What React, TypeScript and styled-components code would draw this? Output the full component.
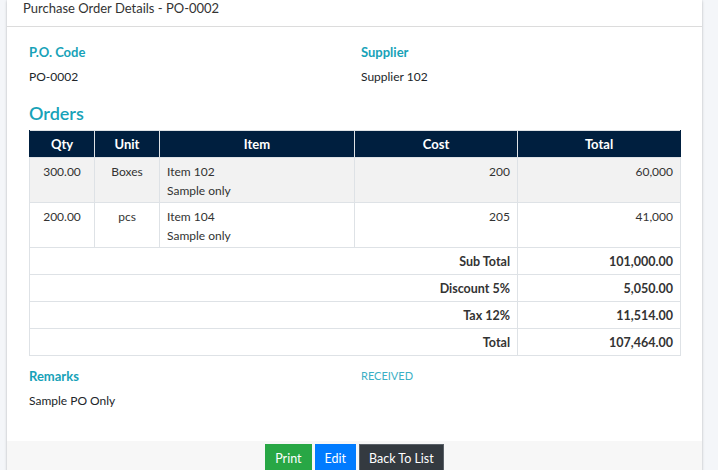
import styled, { createGlobalStyle } from "styled-components";

const GlobalStyle = createGlobalStyle`
  html, body {
    margin: 0;
    padding: 0;
    background: #f4f6f9;
    font-family: Lato, "Noto Sans", sans-serif;
    color: #212529;
  }
  * { box-sizing: border-box; }
`;

const items = [
  { qty: "300.00", unit: "Boxes", name: "Item 102", desc: "Sample only", cost: "200", total: "60,000" },
  { qty: "200.00", unit: "pcs", name: "Item 104", desc: "Sample only", cost: "205", total: "41,000" },
];

const summary = [
  { label: "Sub Total", value: "101,000.00" },
  { label: "Discount 5%", value: "5,050.00" },
  { label: "Tax 12%", value: "11,514.00" },
  { label: "Total", value: "107,464.00" },
];

export default () => {
  return (
    <>
      <GlobalStyle />
      <Page>
        <Card>
          <CardHeader>Purchase Order Details - PO-0002</CardHeader>
          <CardBody>
            <InfoRow>
              <div>
                <Label>P.O. Code</Label>
                <Value>PO-0002</Value>
              </div>
              <div>
                <Label>Supplier</Label>
                <Value>Supplier 102</Value>
              </div>
            </InfoRow>
            <Heading>Orders</Heading>
            <Table>
              <colgroup>
                <col style={{ width: 65 }} />
                <col style={{ width: 65 }} />
                <col style={{ width: 195 }} />
                <col style={{ width: 163 }} />
                <col style={{ width: 163 }} />
              </colgroup>
              <thead>
                <tr>
                  <Th>Qty</Th>
                  <Th>Unit</Th>
                  <Th>Item</Th>
                  <Th>Cost</Th>
                  <Th>Total</Th>
                </tr>
              </thead>
              <tbody>
                {items.map((it, i) => (
                  <BodyRow key={it.name} $striped={i % 2 === 0}>
                    <Td $align="center">{it.qty}</Td>
                    <Td $align="center">{it.unit}</Td>
                    <Td>
                      {it.name}
                      <br />
                      {it.desc}
                    </Td>
                    <Td $align="right">{it.cost}</Td>
                    <Td $align="right">{it.total}</Td>
                  </BodyRow>
                ))}
                {summary.map((s) => (
                  <tr key={s.label}>
                    <SumTd colSpan={4}>{s.label}</SumTd>
                    <SumTd>{s.value}</SumTd>
                  </tr>
                ))}
              </tbody>
            </Table>
            <InfoRow $top={10}>
              <div>
                <Label>Remarks</Label>
                <Value>Sample PO Only</Value>
              </div>
              <div>
                <Status>RECEIVED</Status>
              </div>
            </InfoRow>
          </CardBody>
          <CardFooter>
            <Button $bg="#28a745">Print</Button>
            <Button $bg="#007bff">Edit</Button>
            <Button $bg="#343a40" $border="#5a6168">
              Back To List
            </Button>
          </CardFooter>
        </Card>
      </Page>
    </>
  );
};

const Page = styled.div`
  padding: 0 16px 0 7px;
  height: 470px;
  overflow: hidden;
`;

const Card = styled.div`
  background: #fff;
  box-shadow: 0 0 1px rgba(0, 0, 0, 0.125), 0 1px 3px rgba(0, 0, 0, 0.2);
`;

const CardHeader = styled.div`
  height: 27px;
  padding: 0 16px;
  line-height: 17px;
  font-size: 13px;
  color: #333;
  border-bottom: 1px solid #dcdcdc;
`;

const CardBody = styled.div`
  padding: 15px 22px 30px;
`;

const InfoRow = styled.div<{ $top?: number }>`
  display: grid;
  grid-template-columns: 319px 319px;
  column-gap: 13px;
  margin-top: ${({ $top }) => $top || 0}px;
`;

const Label = styled.div`
  font-size: 13px;
  font-weight: 700;
  color: #17a2b8;
  line-height: 20px;
`;

const Status = styled.div`
  font-size: 11px;
  color: #3bb0c5;
  line-height: 20px;
`;

const Value = styled.div`
  font-size: 12px;
  line-height: 20px;
  margin-top: 5px;
`;

const Heading = styled.h3`
  margin: 14px 0 5px;
  font-size: 18px;
  font-weight: 600;
  line-height: 24px;
  color: #17a2b8;
`;

const Table = styled.table`
  width: 651px;
  border-collapse: collapse;
  table-layout: fixed;
  font-size: 12px;
  border: 1px solid #dee2e6;
`;

const Th = styled.th`
  background: #001f3f;
  color: #fff;
  font-size: 13px;
  font-weight: 700;
  text-align: center;
  padding: 4px 7px 3px;
  line-height: 19px;
  border: 1px solid #dee2e6;
  border-top: 0;
  &:first-child { border-left-color: #001f3f; }
  &:last-child { border-right-color: #001f3f; }
`;

const BodyRow = styled.tr<{ $striped: boolean }>`
  background: ${({ $striped }) => ($striped ? "#f2f2f2" : "#fff")};
`;

const Td = styled.td<{ $align?: string }>`
  padding: 4px 7px 2px;
  line-height: 19px;
  vertical-align: top;
  text-align: ${({ $align }) => $align || "left"};
  color: #333;
  border: 1px solid #dee2e6;
`;

const SumTd = styled.td`
  padding: 4px 7px 3px;
  line-height: 19px;
  text-align: right;
  font-size: 12.5px;
  font-weight: 700;
  color: #333;
  border: 1px solid #dee2e6;
`;

const CardFooter = styled.div`
  background: #f7f7f7;
  padding: 3px 16px 10px;
  display: flex;
  justify-content: center;
  gap: 3px;
`;

const Button = styled.button<{ $bg: string; $border?: string }>`
  background: ${({ $bg }) => $bg};
  border: 1px solid ${({ $border, $bg }) => $border || $bg};
  color: #fff;
  font-family: inherit;
  font-size: 12.5px;
  line-height: 20px;
  padding: 4px 9px;
  border-radius: 0;
  cursor: pointer;
`;
